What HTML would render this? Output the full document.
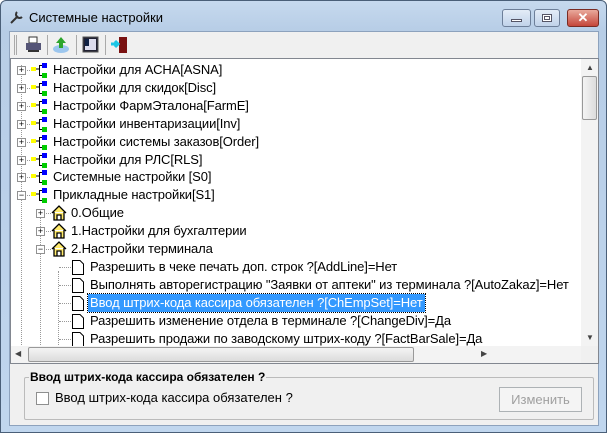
<!DOCTYPE html>
<html><head><meta charset="utf-8"><style>
*{margin:0;padding:0;box-sizing:border-box}
body{width:607px;height:433px;overflow:hidden;background:#fff;font-family:"Liberation Sans",sans-serif;font-size:12px;position:relative}
.win{position:absolute;left:0;top:0;width:607px;height:433px;border:1px solid #4a5f78;border-radius:6px 6px 0 0;background:linear-gradient(#c6d9ee,#b7cde6 30px,#c0d6ee);}
.title{position:absolute;left:28px;top:9px;font-size:13px;color:#000}
.client{position:absolute;left:8px;top:30px;width:590px;height:395px;background:#f0f0f0;border:1px solid #8da2bd}
.tb{position:absolute;left:0;top:0;width:588px;height:26px;background:#f0f0f0}
.tree{position:absolute;left:0px;top:26px;width:589px;height:306px;border:1px solid #828790;background:#fff;overflow:hidden}
.row{position:absolute;height:18px;line-height:18px;font-size:13px;white-space:nowrap;letter-spacing:-0.1px}
.exp{position:absolute;width:9px;height:9px;border:1px solid #919191;background:#fff;font-size:9px;line-height:7px;text-align:center;color:#000}
.vs{position:absolute;right:0;top:0;width:17px;height:287px;background:#f3f3f3}
.hs{position:absolute;left:0;bottom:0;width:570px;height:17px;background:#f3f3f3}
.btn{position:absolute;width:26px;height:18px;top:8px;border:1px solid #6d7f99;border-radius:3px;background:linear-gradient(#e3ecf7,#c1d3ea)}
</style></head><body>
<div class="win">
<svg style="position:absolute;left:8px;top:8px" width="16" height="16"><path d="M2 14 L9 7 M8 3 a3 3 0 1 0 5 5" stroke="#333" stroke-width="2" fill="none"/></svg>
<div class="title">Системные настройки</div>
<div class="btn" style="left:501px;width:29px"><div style="position:absolute;left:8px;top:9px;width:11px;height:3px;background:#fff;border:1px solid #556"></div></div>
<div class="btn" style="left:533px"><div style="position:absolute;left:7px;top:4px;width:10px;height:8px;background:#fff;border:1px solid #556"><div style="margin:1px;width:6px;height:4px;border:1px solid #556"></div></div></div>
<div class="btn" style="left:566px;width:32px;background:linear-gradient(#e9a99c,#c5463a);border-color:#7a2c24;color:#fff;font-weight:bold;text-align:center;font-size:13px;line-height:16px">✕</div>
<div class="client">
<div class="tb">
<div style="position:absolute;left:4px;top:3px;width:3px;height:20px;border-left:1px solid #aaa;border-right:1px solid #aaa"></div>
<svg style="position:absolute;left:14px;top:3px" width="20" height="20"><rect x="5" y="2" width="8" height="6" fill="#fff" stroke="#333"/><rect x="2" y="8" width="15" height="7" fill="#557" /><rect x="4" y="15" width="11" height="2" fill="#333"/></svg>
<div style="position:absolute;left:37px;top:3px;width:1px;height:20px;background:#aaa"></div>
<svg style="position:absolute;left:41px;top:3px" width="20" height="20"><ellipse cx="10" cy="14" rx="8" ry="4" fill="#9cc6ee"/><path d="M10 2 L15 8 H12 V13 H8 V8 H5Z" fill="#2da52d"/></svg>
<div style="position:absolute;left:66px;top:3px;width:1px;height:20px;background:#aaa"></div>
<svg style="position:absolute;left:72px;top:4px" width="18" height="18"><rect x="1" y="1" width="15" height="15" fill="#223" stroke="#555"/><rect x="3" y="3" width="11" height="11" fill="#dde"/><rect x="3" y="3" width="4" height="7" fill="#124"/></svg>
<div style="position:absolute;left:95px;top:3px;width:1px;height:20px;background:#aaa"></div>
<svg style="position:absolute;left:100px;top:3px" width="20" height="20"><rect x="9" y="2" width="8" height="16" fill="#7a1212"/><path d="M1 9 H8 M5 6 L8 9 L5 12" stroke="#1bc6e6" stroke-width="3" fill="none"/></svg>
</div>
<div class="tree">
<div style="position:absolute;left:10px;top:6px;height:300px;border-left:1px dotted #999"></div>
<div style="position:absolute;left:29px;top:158px;height:140px;border-left:1px dotted #999"></div>
<div style="position:absolute;left:47px;top:212px;height:86px;border-left:1px dotted #999"></div>
<div id="rows"></div>
<div class="vs"><div style="position:absolute;left:5px;top:4px;font-size:8px;color:#444">▲</div><div style="position:absolute;left:1px;top:17px;width:15px;height:44px;border:1px solid #999;border-radius:2px;background:linear-gradient(90deg,#f4f4f4,#dcdcdc)"></div><div style="position:absolute;left:5px;bottom:4px;font-size:8px;color:#444">▼</div></div>
<div class="hs"><div style="position:absolute;left:4px;top:3px;font-size:8px;color:#444">◀</div><div style="position:absolute;left:17px;top:1px;width:386px;height:15px;border:1px solid #999;border-radius:2px;background:linear-gradient(#f4f4f4,#dcdcdc)"></div><div style="position:absolute;left:470px;top:3px;font-size:8px;color:#444">▶</div></div>
<div style="position:absolute;right:0;bottom:0;width:17px;height:17px;background:#f0f0f0"></div>
</div>
<fieldset style="position:absolute;left:14px;top:338px;width:570px;height:50px;border:1px solid #bbb;border-radius:2px">
<legend style="font-size:12px;font-weight:bold;padding:0 1px;margin-left:4px">Ввод штрих-кода кассира обязателен ?</legend></fieldset>
<div style="position:absolute;left:26px;top:360px;width:13px;height:13px;border:1px solid #8e8f8f;background:#fff"></div>
<div style="position:absolute;left:45px;top:358px;font-size:13px">Ввод штрих-кода кассира обязателен ?</div>
<div style="position:absolute;left:489px;top:355px;width:83px;height:25px;border:1px solid #adb2b5;background:#f4f4f4;color:#a0a0a0;font-size:13px;text-align:center;line-height:23px">Изменить</div>
</div>
</div>
<script>
var R=[
[0,"+","Настройки для АСНА[ASNA]"],[0,"+","Настройки для скидок[Disc]"],[0,"+","Настройки ФармЭталона[FarmE]"],[0,"+","Настройки инвентаризации[Inv]"],[0,"+","Настройки системы заказов[Order]"],[0,"+","Настройки для РЛС[RLS]"],[0,"+","Системные настройки [S0]"],[0,"−","Прикладные настройки[S1]"],
[1,"+","0.Общие"],[1,"+","1.Настройки для бухгалтерии"],[1,"−","2.Настройки терминала"],
[2,"","Разрешить в чеке печать доп. строк ?[AddLine]=Нет"],[2,"","Выполнять авторегистрацию \"Заявки от аптеки\" из терминала ?[AutoZakaz]=Нет"],[2,"s","Ввод штрих-кода кассира обязателен ?[ChEmpSet]=Нет"],[2,"","Разрешить изменение отдела в терминале ?[ChangeDiv]=Да"],[2,"","Разрешить продажи по заводскому штрих-коду ?[FactBarSale]=Да"]];
var h="";
var EX=[6,25],IX=[20,40],TX=[42,60];
R.forEach(function(r,i){var y=2+i*17.9,lv=r[0];
if(lv<2){var ex=EX[lv];h+='<div class="exp" style="left:'+ex+'px;top:'+(y+5)+'px">'+(r[1]=="+"?"+":"−")+'</div>';
h+='<div style="position:absolute;left:'+(ex+10)+'px;top:'+(y+9)+'px;width:5px;border-top:1px dotted #999"></div>';}
else h+='<div style="position:absolute;left:48px;top:'+(y+9)+'px;width:12px;border-top:1px dotted #999"></div>';
if(lv==0)h+='<svg style="position:absolute;left:'+IX[0]+'px;top:'+(y+1)+'px" width="18" height="16"><rect x="0" y="5" width="5" height="4" fill="#ff0"/><rect x="11" y="1" width="5" height="5" fill="#00f"/><rect x="11" y="11" width="5" height="5" fill="#0c0"/><path d="M11 3.5 H8.5 V13.5 H11 M5 7 H8.5" stroke="#000" fill="none"/></svg>';
else if(lv==1)h+='<svg style="position:absolute;left:'+IX[1]+'px;top:'+(y+1)+'px" width="16" height="16"><path d="M1 8 L8 1 L15 8 M3 7 V15 H13 V7 M6 15 V10 H10 V15" stroke="#000" stroke-width="1.3" fill="#ffea6a"/></svg>';
else h+='<svg style="position:absolute;left:60px;top:'+(y+1)+'px" width="14" height="17"><path d="M1.5 1.5 H9 L12.5 5 V15.5 H1.5Z" fill="#fff" stroke="#000"/></svg>';
var tx=lv==0?TX[0]:(lv==1?TX[1]:79);
var sel=r[1]=="s";
h+='<div class="row" style="left:'+(tx-2)+'px;top:'+y+'px;padding:0 2px;'+(sel?'background:#3399ff;color:#fff;outline:1px dotted #000':'')+'">'+r[2].replace(/</g,"&lt;")+'</div>';
});
document.getElementById("rows").innerHTML=h;
</script>
</body></html>
